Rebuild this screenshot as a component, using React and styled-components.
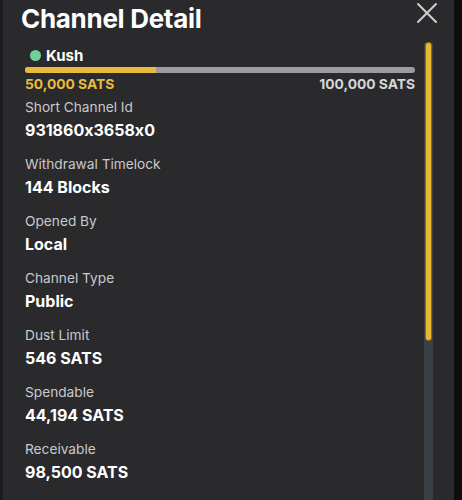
import React from 'react';
import styled, { createGlobalStyle } from 'styled-components';

const GlobalStyle = createGlobalStyle`
  html, body {
    margin: 0;
    padding: 0;
    background: #0e0e0f;
    font-family: Inter, "Liberation Sans", sans-serif;
    font-feature-settings: "calt" 0;
  }
`;

const details = [
  { label: 'Short Channel Id', value: '931860x3658x0' },
  { label: 'Withdrawal Timelock', value: '144 Blocks' },
  { label: 'Opened By', value: 'Local' },
  { label: 'Channel Type', value: 'Public' },
  { label: 'Dust Limit', value: '546 SATS' },
  { label: 'Spendable', value: '44,194 SATS' },
  { label: 'Receivable', value: '98,500 SATS' },
];

function App() {
  const local = 50000;
  const capacity = 100000;
  return (
    <>
      <GlobalStyle />
      <Screen>
        <Panel>
          <Header>
            <Title>Channel Detail</Title>
            <CloseButton aria-label="close">
              <svg width="22" height="22" viewBox="0 0 22 22">
                <path d="M2 2 L20 20 M20 2 L2 20" stroke="#cfcfd1" strokeWidth="2" strokeLinecap="round" />
              </svg>
            </CloseButton>
          </Header>
          <Body>
            <Content>
              <Peer>
                <Dot />
                <PeerName>Kush</PeerName>
              </Peer>
              <Bar>
                <Fill style={{ width: `${(local / capacity) * 33.5 * 2}%` }} />
              </Bar>
              <BarLabels>
                <Amount $accent>50,000 SATS</Amount>
                <Amount>100,000 SATS</Amount>
              </BarLabels>
              {details.map((d) => (
                <Row key={d.label}>
                  <Label>{d.label}</Label>
                  <Value>{d.value}</Value>
                </Row>
              ))}
            </Content>
            <Track>
              <Thumb />
            </Track>
          </Body>
        </Panel>
        <Edge />
      </Screen>
    </>
  );
}

export default App;

const Screen = styled.div`
  display: flex;
  height: 500px;
  overflow: hidden;
`;

const Panel = styled.div`
  flex: 1;
  background: #2a2a2c;
  border-left: 3px solid #1c1c1e;
  display: flex;
  flex-direction: column;
`;

const Edge = styled.div`
  width: 8px;
  background: #0e0e0f;
`;

const Header = styled.div`
  display: flex;
  align-items: flex-start;
  justify-content: space-between;
  padding: 0 16px 0 18px;
  height: 43px;
`;

const Title = styled.h1`
  margin: 3px 0 0;
  font-size: 26px;
  line-height: 32px;
  font-weight: 700;
  color: #ffffff;
  letter-spacing: -0.3px;
`;

const CloseButton = styled.button`
  background: none;
  border: none;
  padding: 0;
  margin-top: 2px;
  cursor: pointer;
  display: flex;
`;

const Body = styled.div`
  flex: 1;
  display: flex;
  min-height: 0;
`;

const Content = styled.div`
  flex: 1;
  padding: 0 9px 0 22px;
  display: flex;
  flex-direction: column;
`;

const Peer = styled.div`
  display: flex;
  align-items: center;
  gap: 5px;
  padding-left: 5px;
  height: 24px;
`;

const Dot = styled.span`
  width: 11px;
  height: 11px;
  border-radius: 50%;
  background: #6cd49a;
`;

const PeerName = styled.span`
  font-size: 15px;
  font-weight: 700;
  color: #ffffff;
`;

const Bar = styled.div`
  height: 6px;
  border-radius: 3px;
  background: #9d9d9f;
  overflow: hidden;
`;

const Fill = styled.div`
  height: 100%;
  background: #e9bb3c;
`;

const BarLabels = styled.div`
  display: flex;
  justify-content: space-between;
  margin-top: 2px;
`;

const Amount = styled.span`
  font-size: 13.8px;
  line-height: 18px;
  font-weight: 700;
  color: ${(p) => (p.$accent ? '#e9bb3c' : '#d6d6d8')};
`;

const Row = styled.div`
  display: flex;
  flex-direction: column;
  gap: 4px;
  margin-top: 5px;
  height: 52px;
`;

const Label = styled.span`
  font-size: 13.7px;
  line-height: 18px;
  color: #c9c9cb;
`;

const Value = styled.span`
  font-size: 16px;
  line-height: 20px;
  font-weight: 700;
  color: #ffffff;
`;

const Track = styled.div`
  width: 9px;
  margin-right: 21px;
  background: #3a3f45;
  display: flex;
  justify-content: center;
`;

const Thumb = styled.div`
  width: 5px;
  height: 297px;
  border-radius: 3px;
  background: #e8b92f;
  box-shadow: 0 0 0 1px #8a6d1c;
`;
